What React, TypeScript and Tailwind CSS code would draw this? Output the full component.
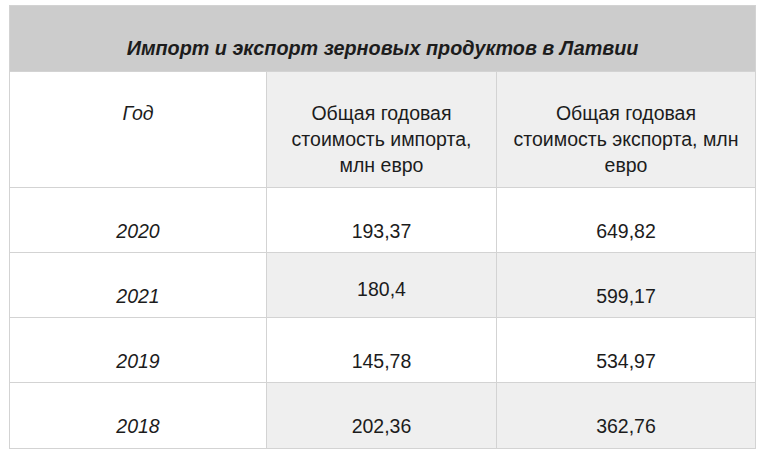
const rows = [
  { year: '2020', imp: '193,37', exp: '649,82', shaded: false, impUp: false },
  { year: '2021', imp: '180,4', exp: '599,17', shaded: true, impUp: true },
  { year: '2019', imp: '145,78', exp: '534,97', shaded: false, impUp: false },
  { year: '2018', imp: '202,36', exp: '362,76', shaded: true, impUp: false },
]

export default function App() {
  return (
    <div className="w-[768px] h-[452px] bg-white pl-[9px] pt-[5px] text-[#1c1c1c]" style={{ fontFamily: '"Liberation Sans", Arial, sans-serif' }}>
      <div className="w-[747px] grid grid-cols-[257px_230px_258px] border border-[#d3d3d3] text-[19.5px] leading-[26px]">
        <div className="col-span-3 h-[66px] bg-[#cccccc] border-b border-[#d3d3d3] flex justify-center pt-[29px] font-bold italic text-[19.8px]">
          Импорт и экспорт зерновых продуктов в Латвии
        </div>

        <div className="h-[116px] border-r border-b border-[#d3d3d3] bg-white text-center italic pt-[28px]">Год</div>
        <div className="h-[116px] border-r border-b border-[#d3d3d3] bg-[#efefef] text-center pt-[28px]">
          Общая годовая
          <br />
          стоимость импорта,
          <br />
          млн евро
        </div>
        <div className="h-[116px] border-b border-[#d3d3d3] bg-[#efefef] text-center pt-[28px]">
          Общая годовая
          <br />
          стоимость экспорта, млн
          <br />
          евро
        </div>

        {rows.map((r, i) => {
          const last = i === rows.length - 1
          return (
            <div key={r.year} className="contents">
              <div className={`h-[65px] border-r border-[#d3d3d3] bg-white text-center italic pt-[30px] ${last ? '' : 'border-b'}`}>
                {r.year}
              </div>
              <div
                className={`h-[65px] border-r border-[#d3d3d3] text-center ${r.impUp ? 'pt-[23px]' : 'pt-[30px]'} ${r.shaded ? 'bg-[#efefef]' : 'bg-white'} ${last ? '' : 'border-b'}`}
              >
                {r.imp}
              </div>
              <div className={`h-[65px] border-[#d3d3d3] text-center pt-[30px] ${r.shaded ? 'bg-[#efefef]' : 'bg-white'} ${last ? '' : 'border-b'}`}>
                {r.exp}
              </div>
            </div>
          )
        })}
      </div>
    </div>
  )
}
